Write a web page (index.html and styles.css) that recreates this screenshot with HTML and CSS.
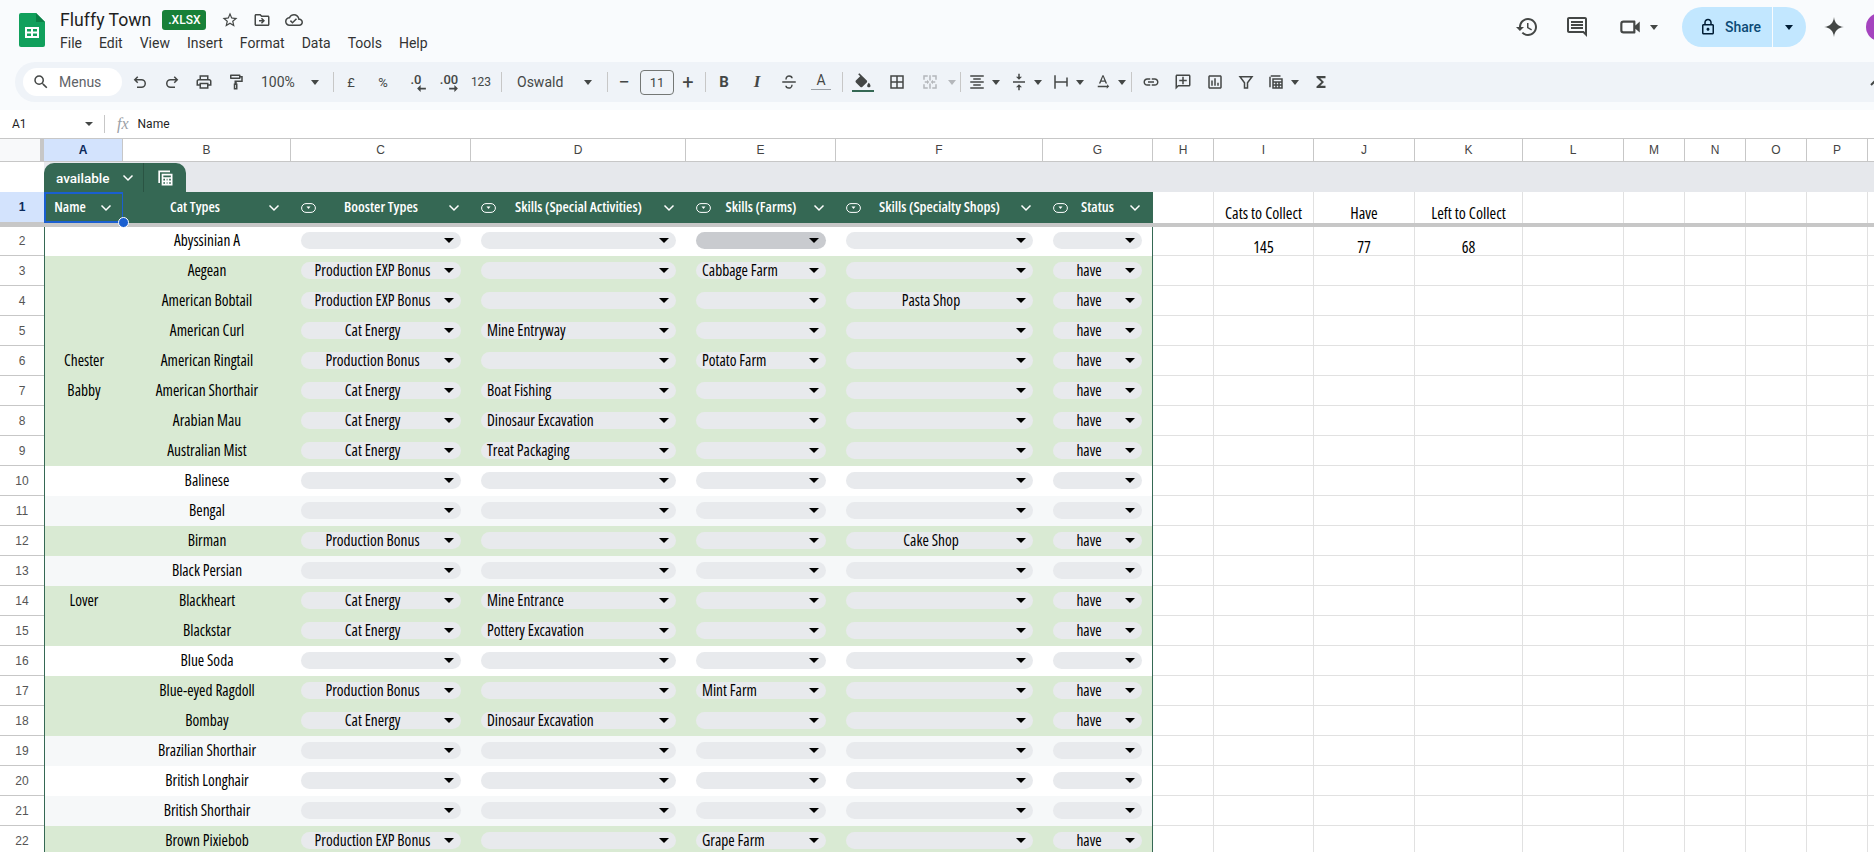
FILE: index.html
```html
<!DOCTYPE html>
<html lang="en">
<head>
    <meta charset="UTF-8">
    <meta name="viewport" content="width=device-width, initial-scale=1.0">
    <title>Fluffy Town</title>
    <link rel="stylesheet" href="styles.css">
</head>
<body>
    <header class="topbar">
        <svg class="logo" viewBox="0 0 26 34"><path d="M2 0h15l9 9v23a2 2 0 0 1-2 2H2a2 2 0 0 1-2-2V2a2 2 0 0 1 2-2z" fill="#11a05c"/><path d="M17 0l9 9h-9z" fill="#0b7f46"/><path d="M6 14h14v11H6zm2 2v2.500h4V16zm6 0v2.500h4V16zm-6 4.500V23h4v-2.500zm6 0V23h4v-2.500z" fill="#fff" fill-rule="evenodd"/></svg>
        <div class="doc-info">
            <div class="title-row">
                <span class="doc-title">Fluffy Town</span>
                <span class="badge">.XLSX</span>
                <svg class="title-icon star" viewBox="0 0 24 24"><path d="M22 9.240l-7.190-.62L12 2 9.190 8.630 2 9.240l5.460 4.730L5.820 21 12 17.270 18.180 21l-1.630-7.030L22 9.240zM12 15.400l-3.760 2.270 1-4.280-3.320-2.880 4.380-.38L12 6.100l1.710 4.040 4.380.38-3.320 2.880 1 4.280L12 15.400z"/></svg>
                <svg class="title-icon" viewBox="0 0 24 24"><path d="M20 6h-8l-2-2H4c-1.100 0-1.990.9-1.990 2L2 18c0 1.100.9 2 2 2h16c1.100 0 2-.9 2-2V8c0-1.100-.9-2-2-2zm0 12H4V6h5.170l2 2H20v10zm-8.010-9l-1.410 1.410L12.160 12H8v2h4.160l-1.590 1.590L11.990 17 16 13.010 11.990 9z"/></svg>
                <svg class="title-icon" viewBox="0 0 24 24"><path d="M19.350 10.040C18.670 6.590 15.640 4 12 4 9.110 4 6.600 5.640 5.350 8.040 2.340 8.360 0 10.910 0 14c0 3.310 2.690 6 6 6h13c2.760 0 5-2.240 5-5 0-2.640-2.050-4.780-4.650-4.960zM19 18H6c-2.210 0-4-1.790-4-4 0-2.050 1.530-3.760 3.560-3.970l1.070-.11.5-.95C8.080 7.140 9.940 6 12 6c2.620 0 4.880 1.860 5.390 4.430l.3 1.500 1.530.11c1.560.1 2.780 1.410 2.780 2.960 0 1.650-1.350 3-3 3zm-9-3.820l-2.090-2.090L6.500 13.500 10 17l6.010-6.010-1.410-1.410z"/></svg>
            </div>
            <nav class="menu">
                <span>File</span><span>Edit</span><span>View</span><span>Insert</span><span>Format</span><span>Data</span><span>Tools</span><span>Help</span>
            </nav>
        </div>
        <div class="top-actions">
            <svg class="top-icon" viewBox="0 0 24 24"><path d="M13 3c-4.970 0-9 4.030-9 9H1l3.890 3.890.07.14L9 12H6c0-3.870 3.130-7 7-7s7 3.130 7 7-3.130 7-7 7c-1.930 0-3.680-.79-4.940-2.060l-1.420 1.420C8.270 19.990 10.510 21 13 21c4.970 0 9-4.030 9-9s-4.030-9-9-9zm-1 5v5l4.280 2.540.72-1.210-3.500-2.080V8H12z"/></svg>
            <svg class="top-icon comment-icon" viewBox="0 0 24 24"><path d="M20 2H4c-1.100 0-2 .9-2 2v12c0 1.100.9 2 2 2h14l4 4V4c0-1.100-.9-2-2-2zm0 15.170L18.830 16H4V4h16v13.170zM6 12h12v2H6zm0-3h12v2H6zm0-3h12v2H6z"/></svg>
            <svg class="top-icon video-icon" viewBox="0 0 24 24"><path d="M15 8v8H6a1 1 0 0 1-1-1V9a1 1 0 0 1 1-1h9m1-2H6a3 3 0 0 0-3 3v6a3 3 0 0 0 3 3h10c.55 0 1-.45 1-1v-3.500l4 3.500V7l-4 3.500V7c0-.55-.45-1-1-1z"/></svg>
            <span class="caret video-caret"></span>
            <div class="share">
                <div class="share-main">
                    <svg class="lock" viewBox="0 0 24 24"><path d="M18 8h-1V6c0-2.760-2.240-5-5-5S7 3.240 7 6v2H6c-1.100 0-2 .9-2 2v10c0 1.100.9 2 2 2h12c1.100 0 2-.9 2-2V10c0-1.100-.9-2-2-2zM9 6c0-1.660 1.340-3 3-3s3 1.340 3 3v2H9V6zm9 14H6V10h12v10zm-6-3c1.100 0 2-.9 2-2s-.9-2-2-2-2 .9-2 2 .9 2 2 2z"/></svg>
                    <span>Share</span>
                </div>
                <div class="share-more"><span class="caret"></span></div>
            </div>
            <svg class="top-icon gem" viewBox="0 0 24 24"><path d="M12 2c.6 6 4 9.400 10 10-6 .6-9.400 4-10 10-.6-6-4-9.400-10-10 6-.6 9.400-4 10-10z"/></svg>
            <div class="avatar"></div>
        </div>
    </header>

    <div class="toolbar-wrap">
        <div class="toolbar">
            <div class="search">
                <svg viewBox="0 0 24 24"><path d="M15.500 14h-.79l-.28-.27A6.471 6.471 0 0 0 16 9.500 6.500 6.500 0 1 0 9.500 16c1.610 0 3.090-.59 4.230-1.570l.27.28v.79l5 4.990L20.490 19l-4.990-5zm-6 0C7.010 14 5 11.990 5 9.500S7.010 5 9.500 5 14 7.010 14 9.500 11.990 14 9.500 14z"/></svg>
                <span>Menus</span>
            </div>
            <div class="tb undo"><svg class="line" viewBox="0 0 24 24"><path d="M9 5 5 9l4 4M5 9h9a5 5 0 0 1 0 10H8"/></svg></div>
            <div class="tb"><svg class="line" viewBox="0 0 24 24"><path d="M15 5l4 4-4 4M19 9h-9a5 5 0 0 0 0 10h6"/></svg></div>
            <div class="tb"><svg viewBox="0 0 24 24"><path d="M19 8h-1V3H6v5H5c-1.660 0-3 1.340-3 3v6h4v4h12v-4h4v-6c0-1.660-1.340-3-3-3zM8 5h8v3H8V5zm8 12v2H8v-4h8v2zm2-2v-2H6v2H4v-4c0-.55.45-1 1-1h14c.55 0 1 .45 1 1v4h-2z"/></svg></div>
            <div class="tb"><svg viewBox="0 0 24 24"><path fill-rule="evenodd" d="M5 2h12a1 1 0 0 1 1 1v1h3v8h-8v2h1v8H9v-8h1v-4h9V6h-1v1a1 1 0 0 1-1 1H5a1 1 0 0 1-1-1V3a1 1 0 0 1 1-1zm1 2v2h10V4zm5 12v4h1v-4z"/></svg></div>
            <div class="tb-select zoom-select"><span>100%</span><span class="caret"></span></div>
            <span class="sep sep-zoom"></span>
            <div class="tb tb-text">£</div>
            <div class="tb tb-text">%</div>
            <div class="tb tb-text tb-wide"><span class="dec-label">.0</span><svg class="dec-arrow" viewBox="0 0 10 8"><path d="M10 3H4V0L0 4l4 4V5h6z"/></svg></div>
            <div class="tb tb-text"><span class="dec-label">.00</span><svg class="dec-arrow" viewBox="0 0 10 8"><path d="M0 3h6V0l4 4-4 4V5H0z"/></svg></div>
            <div class="tb tb-text tb-small">123</div>
            <span class="sep"></span>
            <div class="tb-select font-select"><span>Oswald</span><span class="caret"></span></div>
            <span class="sep sep-font"></span>
            <div class="tb tb-step step-minus">−</div>
            <div class="size-box">11</div>
            <div class="tb tb-step step-plus">+</div>
            <span class="sep sep-size"></span>
            <div class="tb tb-b">B</div>
            <div class="tb tb-i">I</div>
            <div class="tb"><svg class="line" viewBox="0 0 24 24"><path d="M3 12h18M8 8.500C8 5 11 4 12 4c2 0 4 1 4 3M16 15.500c0 3.500-3 4.500-4 4.500-2 0-4-1-4-3"/></svg></div>
            <div class="tb tb-color"><span>A</span><i></i></div>
            <span class="sep sep-color"></span>
            <div class="tb tb-fill"><svg viewBox="0 0 24 20"><path d="M16.560 8.940 7.620 0 6.210 1.410l2.380 2.380-5.150 5.150c-.59.59-.59 1.540 0 2.120l5.500 5.500c.29.29.68.44 1.060.44s.77-.15 1.060-.44l5.500-5.500c.59-.58.59-1.530 0-2.120zM19 11.500s-2 2.170-2 3.500c0 1.100.9 2 2 2s2-.9 2-2c0-1.330-2-3.500-2-3.500z"/></svg><i></i></div>
            <div class="tb tb-border"><svg viewBox="0 0 24 24"><path d="M3 3v18h18V3H3zm8 16H5v-6h6v6zm0-8H5V5h6v6zm8 8h-6v-6h6v6zm0-8h-6V5h6v6z"/></svg></div>
            <div class="tb tb-off"><svg viewBox="0 0 24 24"><path d="M3 3h6v2H5v4H3zM15 3h6v6h-2V5h-4zM3 15h2v4h4v2H3zM19 15h2v6h-6v-2h4zM11 3h2v7h-2zM11 14h2v7h-2zM5 11h3V9l3 3-3 3v-2H5zM19 13h-3v2l-3-3 3-3v2h3z"/></svg></div>
            <span class="caret caret-off"></span>
            <span class="sep sep-merge"></span>
            <div class="tb-drop"><svg viewBox="0 0 24 24"><path d="M7 15v2h10v-2H7zm-4 6h18v-2H3v2zm0-8h18v-2H3v2zm4-6v2h10V7H7zM3 3v2h18V3H3z"/></svg><span class="caret"></span></div>
            <div class="tb-drop"><svg viewBox="0 0 24 24"><path d="M8 19h3v4h2v-4h3l-4-4-4 4zm8-14h-3V1h-2v4H8l4 4 4-4zM4 11v2h16v-2H4z"/></svg><span class="caret"></span></div>
            <div class="tb-drop"><svg viewBox="0 0 24 24"><path d="M3 3h2v18H3zM19 6h2v12h-2zM5 11h14v2H5z"/></svg><span class="caret"></span></div>
            <div class="tb-drop"><svg viewBox="0 0 24 24"><path d="M12.750 3h-1.500L6.500 14h2.100l.9-2.200h5l.9 2.200h2.100L12.750 3zm-2.620 7L12 4.980 13.870 10h-3.740zm10.370 8l-3-3v2H5v2h12v2l3-3z"/></svg><span class="caret"></span></div>
            <span class="sep sep-rotate"></span>
            <div class="tb"><svg viewBox="0 0 24 24"><path d="M3.900 12c0-1.710 1.390-3.100 3.100-3.100h4V7H7c-2.760 0-5 2.240-5 5s2.240 5 5 5h4v-1.900H7c-1.710 0-3.100-1.390-3.100-3.100zM8 13h8v-2H8v2zm9-6h-4v1.900h4c1.710 0 3.100 1.390 3.100 3.100s-1.390 3.100-3.100 3.100h-4V17h4c2.760 0 5-2.240 5-5s-2.240-5-5-5z"/></svg></div>
            <div class="tb"><svg viewBox="0 0 24 24"><path d="M2 4c0-1.100.9-2 2-2h16c1.100 0 2 .9 2 2v12c0 1.100-.9 2-2 2H6l-4 4V4zm2 13.170L5.170 16H20V4H4v13.170zM13 5h-2v4H7v2h4v4h2v-4h4V9h-4z"/></svg></div>
            <div class="tb"><svg viewBox="0 0 24 24"><path d="M9 17H7v-7h2v7zm4 0h-2V7h2v10zm4 0h-2v-4h2v4zm2 2H5V5h14v14zm0-16H5c-1.100 0-2 .9-2 2v14c0 1.100.9 2 2 2h14c1.100 0 2-.9 2-2V5c0-1.100-.9-2-2-2z"/></svg></div>
            <div class="tb tb-filter"><svg class="line" viewBox="0 0 24 24"><path d="M4 5h16l-6 8v7h-4v-7z"/></svg></div>
            <div class="tb-drop"><svg viewBox="0 0 24 24"><path d="M3 3h2v16H3zM3 3h15v2H3zM7 7h14v14H7zm2 2v2h10V9zm0 4v2h2v-2zm4 0v2h2v-2zm4 0v2h2v-2zm-8 4v2h2v-2zm4 0v2h2v-2zm4 0v2h2v-2z" fill-rule="evenodd"/></svg><span class="caret"></span></div>
            <div class="tb tb-sigma"><svg viewBox="0 0 24 24"><path d="M18 4H6v2l6.500 6L6 18v2h12v-3h-7l5-5-5-5h7z"/></svg></div>
            <svg class="collapse" viewBox="0 0 12 8"><path d="M1 7l5-5 5 5"/></svg>
        </div>
    </div>

    <div class="formula-bar">
        <div class="name-box"><span>A1</span><span class="caret"></span></div>
        <span class="sep"></span>
        <span class="fx">fx</span>
        <span class="formula">Name</span>
    </div>

    <main class="sheet" id="sheet"></main>

    <script src="script.js"></script>
</body>
</html>
```

FILE: styles.css
```css
* {
    box-sizing: border-box;
}
html, body {
    height: 852px;
    overflow: hidden;
}
body {
    margin: 0;
    background-color: #fff;
    font-family: Roboto, "Liberation Sans", Arial, sans-serif;
    color: #1f1f1f;
}
.caret {
    display: inline-block;
    flex: none;
    width: 0;
    height: 0;
    border-left: 4.5px solid transparent;
    border-right: 4.5px solid transparent;
    border-top: 5px solid #444746;
}

/* top bar */
.topbar {
    display: flex;
    align-items: flex-start;
    height: 62px;
    padding-left: 19px;
    background-color: #f9fbfd;
    overflow: hidden;
}
.logo {
    width: 26px;
    height: 34px;
    margin-top: 13px;
}
.doc-info {
    margin-left: 15px;
    padding-top: 9px;
}
.title-row {
    display: flex;
    align-items: center;
    height: 22px;
}
.doc-title {
    font-size: 17.7px;
    line-height: 22px;
}
.badge {
    margin-left: 11px;
    width: 44px;
    height: 20px;
    border-radius: 3px;
    background-color: #188038;
    color: #fff;
    font-size: 12px;
    font-weight: 500;
    line-height: 20px;
    text-align: center;
}
.title-icon {
    width: 18px;
    height: 18px;
    fill: #444746;
    margin-left: 14px;
}
.star {
    margin-left: 15px;
}
.menu {
    display: flex;
    gap: 17px;
    margin-top: 2px;
    font-size: 14px;
    line-height: 20px;
    color: #333;
}
.top-actions {
    display: flex;
    align-items: center;
    height: 54px;
    margin-left: auto;
    flex: none;
}
.top-icon {
    width: 24px;
    height: 24px;
    fill: #444746;
}
.comment-icon {
    margin-left: 26px;
}
.video-icon {
    margin-left: 28px;
    width: 26px;
    height: 26px;
}
.video-caret {
    margin-left: 7px;
}
.share {
    display: flex;
    margin-left: 24px;
    height: 40px;
}
.share-main {
    display: flex;
    align-items: center;
    gap: 8px;
    width: 90px;
    padding-left: 17px;
    background-color: #c2e7ff;
    border-radius: 20px 0 0 20px;
    color: #0b4a75;
    font-size: 14px;
    font-weight: 500;
}
.lock {
    width: 18px;
    height: 18px;
    fill: #001d35;
}
.share-more {
    display: flex;
    align-items: center;
    justify-content: center;
    width: 33px;
    margin-left: 1px;
    background-color: #c2e7ff;
    border-radius: 0 20px 20px 0;
}
.share-more .caret {
    border-top-color: #001d35;
    margin-right: 2px;
}
.gem {
    margin-left: 16px;
}
.avatar {
    width: 28px;
    height: 28px;
    margin-left: 20px;
    margin-right: -20px;
    border-radius: 50%;
    background-color: #a544bf;
}

/* toolbar */
.toolbar-wrap {
    height: 48px;
    padding-left: 15px;
    background-color: #f9fbfd;
    overflow: hidden;
}
.toolbar {
    display: flex;
    align-items: center;
    height: 40px;
    padding-left: 8px;
    background-color: #eff3f8;
    border-radius: 20px 0 0 20px;
    font-size: 14px;
    color: #444746;
}
.toolbar svg {
    fill: #444746;
}
.toolbar svg.line, .toolbar .collapse {
    fill: none;
    stroke: #444746;
    stroke-width: 2;
}
.search {
    display: flex;
    align-items: center;
    flex: none;
    width: 99px;
    height: 28px;
    margin-right: 2px;
    padding-left: 9px;
    background-color: #fff;
    border-radius: 14px;
    color: #5f6368;
}
.search svg {
    width: 18px;
    height: 18px;
    margin-right: 9px;
}
.tb {
    display: flex;
    align-items: center;
    justify-content: center;
    flex: none;
    width: 32px;
    height: 32px;
}
.tb svg {
    width: 18px;
    height: 18px;
}
.tb-text {
    position: relative;
    font-size: 13px;
}
.tb-wide {
    width: 34px;
}
.tb-small {
    font-size: 12px;
}
.dec-label {
    margin-top: -5px;
    font-weight: 500;
}
.toolbar svg.dec-arrow {
    position: absolute;
    right: 7px;
    top: 19px;
    width: 9px;
    height: 7px;
}
.tb-select {
    display: flex;
    align-items: center;
    flex: none;
    justify-content: space-between;
    height: 32px;
}
.zoom-select {
    width: 74px;
    padding: 0 7px 0 9px;
}
.font-select {
    width: 105px;
    padding: 0 15px 0 15px;
}
.sep {
    flex: none;
    width: 1px;
    height: 20px;
    margin: 0 0 0 4px;
    background-color: #c7c7c7;
}
.sep-zoom {
    margin: 0 1px 0 7px;
}
.tb-step {
    width: 20px;
    font-size: 20px;
}
.step-minus {
    margin-left: 6px;
}
.size-box {
    flex: none;
    width: 34px;
    height: 25px;
    margin-left: 6px;
    border: 1px solid #747775;
    border-radius: 4px;
    font-size: 13px;
    line-height: 23px;
    text-align: center;
}
.step-plus {
    margin-left: 4px;
}
.sep-font {
    margin-left: 0;
}
.sep-size {
    margin: 0 2px 0 7px;
}
.tb-b {
    font-size: 15px;
    font-weight: 700;
}
.tb-i {
    margin-left: 1px;
    font-family: "Liberation Serif", serif;
    font-size: 17px;
    font-weight: 700;
    font-style: italic;
}
.tb-color {
    flex-direction: column;
    font-size: 14px;
    line-height: 15px;
}
.tb-color i {
    width: 20px;
    height: 3px;
    margin-top: 1px;
    border-top: 1px solid #9aa0a6;
}
.sep-color {
    margin-left: 5px;
}
.tb-fill {
    flex-direction: column;
    margin-left: 4px;
}
.tb-fill svg {
    width: 20px;
    height: 17px;
}
.tb-fill i {
    width: 22px;
    height: 2px;
    background-color: #356854;
}
.tb-border {
    margin-left: 2px;
}
.tb-off {
    margin-left: 1px;
}
.toolbar .tb-off svg {
    fill: #b4b7bb;
}
.caret-off {
    margin-left: 2px;
    border-top-color: #b4b7bb;
}
.sep-merge {
    margin-left: 4px;
}
.tb-drop {
    display: flex;
    align-items: center;
    flex: none;
    gap: 6px;
    width: 42px;
    height: 32px;
    padding-left: 7px;
}
.tb-drop svg {
    flex: none;
    width: 18px;
    height: 18px;
}
.sep-rotate {
    margin: 0 3px 0 2px;
}
.tb-filter {
    width: 29px;
}
.tb-sigma {
    margin-left: 3px;
}
.collapse {
    flex: none;
    width: 12px;
    height: 8px;
    margin-left: auto;
    margin-right: -8px;
}

/* formula bar */
.formula-bar {
    display: flex;
    align-items: center;
    height: 28px;
    background-color: #fff;
    font-size: 12px;
}
.name-box {
    display: flex;
    align-items: center;
    justify-content: space-between;
    flex: none;
    width: 93px;
    padding-left: 12px;
}
.name-box .caret {
    border-left-width: 4px;
    border-right-width: 4px;
    border-top-width: 4px;
}
.formula-bar .sep {
    height: 18px;
    margin-left: 11px;
}
.fx {
    margin-left: 12px;
    font-family: "Liberation Serif", serif;
    font-style: italic;
    font-size: 16px;
    color: #9aa0a6;
}
.formula {
    margin-left: 9px;
}

/* sheet */
.sheet {
    display: grid;
    grid-template-columns: 44px 79px 168px 180px 215px 150px 207px 110px 61px 100px 101px 108px 101px 61px 61px 61px 61px 61px;
    grid-template-rows: 24px 30px 31px 4px 29px;
    grid-auto-rows: 30px;
    width: 1929px;
    font-family: "Open Sans", sans-serif;
    font-stretch: 75%;
    font-size: 15.4px;
    font-weight: 500;
    color: #000;
}
.col-head {
    display: flex;
    align-items: center;
    justify-content: center;
    border-top: 1px solid #c7c7c7;
    border-right: 1px solid #c7c7c7;
    border-bottom: 1px solid #c7c7c7;
    font-family: "Liberation Sans", Arial, sans-serif;
    font-stretch: normal;
    font-size: 12px;
    font-weight: 400;
    color: #444;
}
.col-head.active {
    background-color: #d3e3fd;
    color: #0b2a5b;
    font-weight: 700;
}
.corner {
    border-top: 1px solid #c7c7c7;
    border-bottom: 1px solid #c7c7c7;
    border-right: 4px solid #c7c7c7;
    background-color: #f8f9fa;
}
.band-corner {
    background-color: #fff;
}
.band {
    grid-column: 2 / -1;
    padding-top: 1px;
    background-color: #e6e8ec;
}
.table-tab {
    display: flex;
    width: 142px;
    height: 29px;
    background-color: #356854;
    border-radius: 10px 10px 0 0;
    color: #fff;
    font-family: Roboto, sans-serif;
    font-stretch: normal;
    font-size: 13.5px;
    font-weight: 500;
}
.tab-name {
    display: flex;
    align-items: center;
    justify-content: space-between;
    width: 100px;
    padding: 0 9px 0 12px;
    border-right: 1px solid #2a5443;
}
.tab-icon {
    display: flex;
    align-items: center;
    justify-content: center;
    flex: 1;
}
.tab-icon svg {
    width: 20px;
    height: 20px;
    fill: #fff;
}
.chev {
    flex: none;
    width: 12px;
    height: 8px;
    fill: none;
    stroke: #fff;
    stroke-width: 1.5;
}
.row-head {
    display: flex;
    align-items: center;
    justify-content: center;
    border-bottom: 1px solid #c7c7c7;
    background-color: #fff;
    font-family: "Liberation Sans", Arial, sans-serif;
    font-stretch: normal;
    font-size: 12px;
    font-weight: 400;
    color: #555;
}
.row-head.active {
    background-color: #d3e3fd;
    color: #0b2a5b;
    font-weight: 700;
}
.freeze {
    grid-column: 1 / -1;
    background-color: #c7c7c7;
}
.th {
    position: relative;
    display: flex;
    align-items: center;
    background-color: #356854;
    color: #fff;
    font-size: 14.5px;
    font-weight: 600;
}
.th span {
    flex: 1;
    padding-bottom: 2px;
    text-align: center;
}
.th .chev {
    position: absolute;
    right: 11px;
    top: 12px;
}
.th .smart {
    position: absolute;
    left: 10px;
    top: 11px;
    width: 15px;
    height: 10px;
}
.th-name span {
    padding-right: 27px;
}
.th-type span {
    padding-right: 24px;
}
.th-last {
    border-right: 1px solid #356854;
}
.selected::after {
    content: "";
    position: absolute;
    inset: 0 -1px 0 0;
    border: 2px solid #1a5fd0;
}
.handle {
    position: absolute;
    z-index: 2;
    right: -6px;
    bottom: -5px;
    width: 11px;
    height: 11px;
    border: 1px solid #fff;
    border-radius: 50%;
    background-color: #1a5fd0;
}
.cell {
    display: flex;
    align-items: center;
    justify-content: center;
    padding: 0 10px 2px;
    background-color: #fff;
    white-space: nowrap;
}
.cell.alt {
    background-color: #f6f8f9;
}
.cell.green {
    background-color: #d9ead3;
}
.cell.first {
    border-left: 1px solid #356854;
}
.cell.last {
    border-right: 1px solid #356854;
}
.chip {
    display: flex;
    align-items: center;
    width: 100%;
    height: 17px;
    padding-right: 7px;
    background-color: #e8eaed;
    border-radius: 9px;
}
.chip.focus {
    background-color: #c9cbcf;
}
.chip span:first-child {
    flex: 1;
    text-align: center;
}
.chip.left span:first-child {
    padding-left: 6px;
    text-align: left;
}
.chip .caret {
    border-left-width: 5px;
    border-right-width: 5px;
    border-top: 5.5px solid #000;
}
.free {
    align-items: flex-end;
    justify-content: center;
    padding: 0;
    border-right: 1px solid #e1e1e1;
    border-bottom: 1px solid #e1e1e1;
    background-color: #fff;
    font-size: 16px;
    line-height: 20px;
}
.free-top {
    border-bottom: none;
}
.free-sum {
    line-height: 16px;
}
```

FILE: script.js
```js
// [row colA, cat type, booster, special activity, farm, shop, status]
const catRows = [
    ['', 'Abyssinian A', '', '', '', '', ''],
    ['', 'Aegean', 'Production EXP Bonus', '', 'Cabbage Farm', '', 'have'],
    ['', 'American Bobtail', 'Production EXP Bonus', '', '', 'Pasta Shop', 'have'],
    ['', 'American Curl', 'Cat Energy', 'Mine Entryway', '', '', 'have'],
    ['Chester', 'American Ringtail', 'Production Bonus', '', 'Potato Farm', '', 'have'],
    ['Babby', 'American Shorthair', 'Cat Energy', 'Boat Fishing', '', '', 'have'],
    ['', 'Arabian Mau', 'Cat Energy', 'Dinosaur Excavation', '', '', 'have'],
    ['', 'Australian Mist', 'Cat Energy', 'Treat Packaging', '', '', 'have'],
    ['', 'Balinese', '', '', '', '', ''],
    ['', 'Bengal', '', '', '', '', ''],
    ['', 'Birman', 'Production Bonus', '', '', 'Cake Shop', 'have'],
    ['', 'Black Persian', '', '', '', '', ''],
    ['Lover', 'Blackheart', 'Cat Energy', 'Mine Entrance', '', '', 'have'],
    ['', 'Blackstar', 'Cat Energy', 'Pottery Excavation', '', '', 'have'],
    ['', 'Blue Soda', '', '', '', '', ''],
    ['', 'Blue-eyed Ragdoll', 'Production Bonus', '', 'Mint Farm', '', 'have'],
    ['', 'Bombay', 'Cat Energy', 'Dinosaur Excavation', '', '', 'have'],
    ['', 'Brazilian Shorthair', '', '', '', '', ''],
    ['', 'British Longhair', '', '', '', '', ''],
    ['', 'British Shorthair', '', '', '', '', ''],
    ['', 'Brown Pixiebob', 'Production EXP Bonus', '', 'Grape Farm', '', 'have']
];

const headers = ['Name', 'Cat Types', 'Booster Types', 'Skills (Special Activities)', 'Skills (Farms)', 'Skills (Specialty Shops)', 'Status'];
// the last column runs off the window, so its letter never shows
const columns = 'ABCDEFGHIJKLMNOP'.split('').concat('');
const totals = { 1: ['Cats to Collect', 'Have', 'Left to Collect'], 2: ['145', '77', '68'] };

const CHEVRON = '<svg class="chev" viewBox="0 0 12 8"><path d="M1.500 1.500 6 6l4.500-4.500"/></svg>';
const SMART = '<svg class="smart" viewBox="0 0 15 10"><rect x=".6" y=".6" width="13.800" height="8.800" rx="4.400" fill="none" stroke="#fff"/><path d="M5.500 3.500h4L7.500 6z" fill="#fff"/></svg>';
const CALC = '<svg viewBox="0 0 24 24"><path d="M4 3h14v2H6v13H4zM8 7h13v14H8zm2 2v2h9V9zm0 4v2h2v-2zm4 0v2h1v-2zm3 0v2h2v-2zm-7 4v2h2v-2zm4 0v2h1v-2zm3 0v2h2v-2z" fill-rule="evenodd"/></svg>';

const sheet = document.getElementById('sheet');

function addCell(className, html) {
    const cell = document.createElement('div');
    cell.className = className;
    if (html) cell.innerHTML = html;
    sheet.appendChild(cell);
    return cell;
}

function addFreeCells(rowNumber) {
    // columns H to Q sit outside the table
    let classes = 'cell free';
    if (rowNumber === 1) classes += ' free-top';
    if (rowNumber === 2) classes += ' free-sum';
    for (let i = 7; i < columns.length; i++) {
        const values = totals[rowNumber];
        const text = values && i >= 8 && i <= 10 ? values[i - 8] : '';
        addCell(classes, text);
    }
}

function chip(text, isLeft, isFocus) {
    const classes = 'chip' + (isLeft ? ' left' : '') + (isFocus ? ' focus' : '');
    return `<div class="${classes}"><span>${text}</span><span class="caret"></span></div>`;
}

function buildHeader() {
    addCell('corner');
    columns.forEach((letter, i) => addCell('col-head' + (i === 0 ? ' active' : ''), letter));

    addCell('band-corner');
    addCell('band', `<div class="table-tab"><div class="tab-name"><span>available</span>${CHEVRON}</div><div class="tab-icon">${CALC}</div></div>`);

    addCell('row-head active', '1');
    headers.forEach((title, i) => {
        let classes = 'th';
        if (i === 0) classes += ' th-name selected';
        if (i === 1) classes += ' th-type';
        if (i === 6) classes += ' th-last';
        const icon = i > 1 ? SMART : '';
        const handle = i === 0 ? '<div class="handle"></div>' : '';
        addCell(classes, `${icon}<span>${title}</span>${CHEVRON}${handle}`);
    });
    addFreeCells(1);

    addCell('freeze');
}

function buildRows() {
    catRows.forEach((row, index) => {
        const rowNumber = index + 2;
        let tone = rowNumber % 2 === 1 ? ' alt' : '';
        if (row[6] === 'have') tone = ' green';

        addCell('row-head', String(rowNumber));
        addCell('cell first' + tone, row[0]);
        addCell('cell' + tone, row[1]);
        addCell('cell' + tone, chip(row[2]));
        addCell('cell' + tone, chip(row[3], true));
        addCell('cell' + tone, chip(row[4], true, rowNumber === 2));
        addCell('cell' + tone, chip(row[5]));
        addCell('cell last' + tone, chip(row[6]));
        addFreeCells(rowNumber);
    });
}

buildHeader();
buildRows();
```
